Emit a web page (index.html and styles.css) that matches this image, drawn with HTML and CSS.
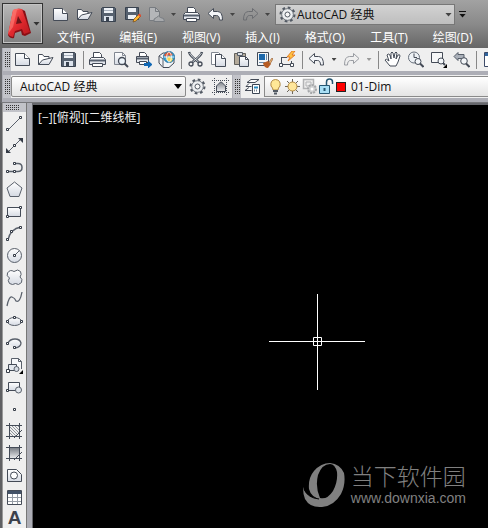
FILE: index.html
```html
<!DOCTYPE html>
<html lang="zh-CN">
<head>
<meta charset="utf-8">
<title>AutoCAD 经典</title>
<link rel="stylesheet" href="styles.css">
</head>
<body>
<svg class="sprite" aria-hidden="true">
  <defs>
    <linearGradient id="paper" x1="0" y1="0" x2="0" y2="1"><stop offset="0" stop-color="#fff"/><stop offset="1" stop-color="#d5dae3"/></linearGradient>
    <linearGradient id="fade" x1="0" y1="0" x2="0" y2="1"><stop offset="0" stop-color="#7c8188"/><stop offset="1" stop-color="#f0f1f3"/></linearGradient>
    <linearGradient id="red" x1="0" y1="0" x2="1" y2="1"><stop offset="0" stop-color="#ff6a62"/><stop offset=".5" stop-color="#e22a2f"/><stop offset="1" stop-color="#b5171d"/></linearGradient>
    <pattern id="hatch" width="3" height="3" patternUnits="userSpaceOnUse"><path d="M0 0l3 3" stroke="#777d86" stroke-width=".8"/></pattern>
  </defs>
  <symbol id="new" viewBox="0 0 17 17"><path d="M1.500 2.500h9l5 5v7h-14z" fill="url(#paper)" stroke="#444b57"/><path d="M10.500 2.500v5h5" fill="#fff" stroke="#444b57"/></symbol>
  <symbol id="open" viewBox="0 0 17 17"><path d="M1.500 13.500v-10h4l1.500 2h5v3" fill="#fff" stroke="#444b57"/><path d="M1.500 13.500l4-4.500 10.500-2.500-4 7z" fill="url(#paper)" stroke="#444b57"/></symbol>
  <symbol id="save" viewBox="0 0 17 17"><path d="M2.500 1.500h12l1 1v13h-14v-13z" fill="#56616f" stroke="#39424f"/><path d="M4 2h9v5H4z" fill="#edf1f6"/><path d="M4 4.500h9" stroke="#aab3bf"/><path d="M4 10h9v5H4z" fill="#dce3ec"/><path d="M6 11h3v4H6z" fill="#39424f"/></symbol>
  <symbol id="saveas" viewBox="0 0 17 17"><path d="M1.500 1.500h13v12h-13z" fill="#56616f" stroke="#39424f"/><path d="M4 2h8v4H4zM4 9h8v4H4z" fill="#edf1f6"/><path d="M9 16l1-3 5-5 2 2-5 5z" fill="#ffb52e" stroke="#704b20" stroke-width=".7"/><path d="M14 9l1.500-1.500 2 2L16 11z" fill="#e24b31"/></symbol>
  <symbol id="sheet" viewBox="0 0 17 17"><path d="M1.500 1.500h6l4 4v9h-10z" fill="#b4b6b9" stroke="#777b80"/><path d="M7.500 1.500v4h4" fill="none" stroke="#777b80"/><path d="M6 15.500q-1-3 2.500-4 2-3 4 0 4 0 4 4z" fill="#a8aaad" stroke="#777b80"/></symbol>
  <symbol id="print" viewBox="0 0 17 17"><path d="M4.500 6.500v-5h6l2 2v3" fill="#fff" stroke="#444b57"/><path d="M2.500 6.500h12l2 2v5h-16v-5z" fill="url(#paper)" stroke="#444b57"/><path d="M1 9.500h15" stroke="#56606e" stroke-width="2"/><path d="M3.500 12.500h10v3h-10z" fill="#fff" stroke="#444b57"/></symbol>
  <symbol id="preview" viewBox="0 0 17 17"><path d="M2.500 13.500v-12h8l3 3v9z" fill="url(#paper)" stroke="#818791"/><path d="M10.500 1.500v3h3" fill="none" stroke="#818791"/><circle cx="10" cy="10" r="3.500" fill="#edf4fa" stroke="#444b57" stroke-width="1.300"/><path d="M12.500 12.500l3.500 3.500" stroke="#444b57" stroke-width="2"/></symbol>
  <symbol id="publish" viewBox="0 0 17 17"><path d="M4.500 5.500v-4h5l2 2v2" fill="#fff" stroke="#444b57"/><path d="M1.500 5.500h12v6h-12z" fill="#e7ebf0" stroke="#444b57"/><path d="M2 7.500h11" stroke="#56606e" stroke-width="2"/><path d="M4.500 10.500h7v3h-7z" fill="#fff" stroke="#444b57"/><path d="M9 12h4V9.500l4.500 4-4.500 4V15H9z" fill="#1269b5"/></symbol>
  <symbol id="globe" viewBox="0 0 17 17"><path d="M1 5l4-3h7l4 3v7l-5 4.500H5L1 12z" fill="#f2f4f7" stroke="#444b57"/><path d="M1 5l4 3v8" fill="none" stroke="#59616d"/><circle cx="11" cy="6" r="5.500" fill="#38a5da" stroke="#25709d"/><path d="M6 4q5-6 9 0l-3 1-2-1-1 3z" fill="#e1542e"/><path d="M8 8l3-3 4 3-2 3-3-1z" fill="#f4d756"/><path d="M11 .5q-5 5.500 0 11q5-5.500 0-11M5.500 6h11" fill="none" stroke="#fff" stroke-width=".8"/></symbol>
  <symbol id="cut" viewBox="0 0 17 17"><path d="M2 1q1 4 9.500 10M15 1q-1 4-9.500 10" stroke="#444b57" stroke-width="2.500" fill="none"/><path d="M2.500 2q2 4 9 9M14.500 2q-2 4-9 9" stroke="#eef1f4" stroke-width=".8" fill="none"/><circle cx="4" cy="13" r="2" fill="none" stroke="#444b57" stroke-width="1.300"/><circle cx="13" cy="13" r="2" fill="none" stroke="#444b57" stroke-width="1.300"/></symbol>
  <symbol id="copy" viewBox="0 0 17 17"><path d="M1.500 1.500h7l2 2v10h-9z" fill="#fff" stroke="#818791"/><path d="M5.500 3.500h6l4 4v8h-10z" fill="url(#paper)" stroke="#444b57"/><path d="M11.500 3.500v4h4" fill="#fff" stroke="#444b57"/></symbol>
  <symbol id="paste" viewBox="0 0 17 17"><path d="M1.500 2.500h11v11h-11z" fill="#b4aa9a" stroke="#62605c"/><path d="M4.500 1.500h5v3h-5z" fill="#dce0e5" stroke="#555c66"/><path d="M6.500 5.500h6l3 3v7h-9z" fill="url(#paper)" stroke="#444b57"/><path d="M12.500 5.500v3h3" fill="none" stroke="#444b57"/></symbol>
  <symbol id="match" viewBox="0 0 17 17"><path d="M1.500 1.500h11v13h-11z" fill="#f4f6f8" stroke="#444b57"/><path d="M3 3h6v6H3z" fill="#1c68ab"/><path d="M10.500 3v6M3 11.500h6" stroke="#6a89a8"/><path d="M7 12l5-2 3 3-3 4q-4 0-5-5z" fill="#b85d24"/><path d="M13 11l3-4 1 1-3 5z" fill="#e8b374" stroke="#8b532c" stroke-width=".6"/></symbol>
  <symbol id="block" viewBox="0 0 17 17"><path d="M2 6.500h6M2.500 6v7M2 13.500h11M12.500 10v3" stroke="#444b57" fill="none"/><path d="M.5 12.500h3v3h-3zM11.500 12.500h3v3h-3z" fill="#fff" stroke="#444b57"/><path d="M13 0L8 6h3L9 10l7-6h-3l3-4z" fill="#ffc343" stroke="#dc6b15" stroke-width=".8"/></symbol>
  <symbol id="undo" viewBox="0 0 17 17"><path d="M6.500 2.500v3h4q5 0 5 8.500h-3q0-4.500-3-4.500h-3v3L1 7.500z" fill="#f3f5f8" stroke="#444b57"/></symbol>
  <symbol id="redo" viewBox="0 0 17 17"><path d="M10.500 2.500v3h-4q-5 0-5 8.500h3q0-4.500 3-4.500h3v3L16 7.500z" fill="none" stroke="#999ca2"/></symbol>
  <symbol id="hand" viewBox="0 0 17 17"><path d="M6 15L1 9q1-2 4 1L3 4q1-2 3 0l1 4V2q1-2 2 0l1 5 1-5q1-2 2 0l-1 6 2-4q2-1 2 1l-2 6-2 4z" fill="#fff" stroke="#444b57"/></symbol>
  <symbol id="zoomtime" viewBox="0 0 17 17"><circle cx="7" cy="6.500" r="5.500" fill="#edf1f5" stroke="#68707c"/><path d="M7 2.500v4h3" fill="none" stroke="#444b57"/><circle cx="11" cy="10.500" r="3" fill="#f3f6f9" stroke="#444b57"/><path d="M13 12.500l3.500 3.500" stroke="#444b57" stroke-width="2"/></symbol>
  <symbol id="zoomwin" viewBox="0 0 17 17"><path d="M1.500 1.500h11v10h-11z" fill="#f6f7f8" stroke="#444b57"/><circle cx="11" cy="10" r="3" fill="#f3f6f9" stroke="#444b57"/><path d="M13 12l2 2" stroke="#444b57" stroke-width="2"/><path d="M17 13v4h-4z" fill="#000"/></symbol>
  <symbol id="zoomprev" viewBox="0 0 17 17"><path d="M5 1.500v2h6v4H5v2l-4-4z" fill="#aab0b9" stroke="#555d68"/><circle cx="11" cy="10" r="3.300" fill="#f3f6f9" stroke="#444b57"/><path d="M13 12.500l3.500 3.500" stroke="#444b57" stroke-width="2"/></symbol>
  <symbol id="props" viewBox="0 0 17 17"><path d="M2.500 1.500h14v14h-14z" fill="#fff" stroke="#3d4a68"/><path d="M3 3.500h12" stroke="#31659e" stroke-width="3"/></symbol>
  <symbol id="gear" viewBox="0 0 17 17"><circle cx="8.500" cy="8.500" r="7" fill="none" stroke="#535a64" stroke-width="2" stroke-dasharray="2.750 2.750"/><circle cx="8.500" cy="8.500" r="5.800" fill="#eef0f2" stroke="#535a64" stroke-width=".8"/><circle cx="8.500" cy="8.500" r="2.500" fill="#f8f8f8" stroke="#535a64"/></symbol>
  <symbol id="workspace" viewBox="0 0 17 17"><path d="M2.500 0v17M14.500 0v17M0 2.500h17M0 14.500h17" stroke="#444b57" stroke-dasharray="1 1"/><path d="M4.500 13.500V8l4-4h1l4 4v5.500z" fill="url(#fade)" stroke="#444b57"/></symbol>
  <symbol id="layers" viewBox="0 0 17 17"><path d="M3 4.500l4-3h8l-4 3zM7.500 8.500H2l3-3M7.500 12.500H1l4-3" fill="#fff" stroke="#444b57"/><path d="M8.500 6.500h7v9h-7z" fill="#fff" stroke="#3b4655"/><path d="M10 9.500h4" stroke="#2789bd" stroke-width="2"/><path d="M10 12.500h4" stroke="#7b8590" stroke-width="2" stroke-dasharray="1 1"/></symbol>
  <symbol id="bulb" viewBox="0 0 17 17"><path d="M6 12q0-2-2-4-1-6 4.500-6.500Q14 2 13 8q-2 2-2 4z" fill="#ffe896" stroke="#b18a45"/><path d="M6 13h5M7 15.500h3" stroke="#535b65" stroke-width="2"/></symbol>
  <symbol id="sun" viewBox="0 0 17 17"><path d="M8.500 1v15M1 8.500h15M3 3l11 11M14 3L3 14" stroke="#6d675c"/><circle cx="8.500" cy="8.500" r="4.500" fill="#ffe69a" stroke="#b3893f"/></symbol>
  <symbol id="vpfreeze" viewBox="0 0 17 17"><path d="M2.500 1.500h10v9h-10z" fill="#eee" stroke="#b2b3b5" stroke-width="1.500"/><path d="M5 4h5v4H5z" fill="none" stroke="#b2b3b5"/><circle cx="11" cy="11" r="4" fill="#cfd0d1" stroke="#a6a8aa" stroke-width="2" stroke-dasharray="2 1"/><circle cx="11" cy="11" r="1.500" fill="#fff"/></symbol>
  <symbol id="lock" viewBox="0 0 17 17"><path d="M8.500 7V4q0-3 3-3t3 3v2" fill="none" stroke="#275873" stroke-width="1.500"/><path d="M1.500 7.500h10v8h-10z" fill="#a9dff5" stroke="#275873"/><path d="M6.500 10v3" stroke="#275873" stroke-width="2"/></symbol>
  <symbol id="line" viewBox="0 0 17 17"><path d="M2 15L15 2" stroke="#59606b"/><path d="M.5 13.500h2v2h-2zM13.500 1.500h2v2h-2z" fill="#fff" stroke="#343b46"/></symbol>
  <symbol id="xline" viewBox="0 0 17 17"><path d="M2 15L15 2" stroke="#59606b"/><path d="M0 11v5h5zM12 1h5v5z" fill="#343b46"/><path d="M7.500 7.500h2v2h-2z" fill="#fff" stroke="#343b46"/></symbol>
  <symbol id="pline" viewBox="0 0 17 17"><path d="M1 12.500h11q4 0 4-4t-4-4H9" fill="none" stroke="#59606b" stroke-width="1.500"/><path d="M.5 11.500h2v2h-2zM7.500 11.500h2v2h-2zM7.500 3.500h2v2h-2z" fill="#fff" stroke="#343b46"/></symbol>
  <symbol id="polygon" viewBox="0 0 17 17"><path d="M8.500 1l7.500 6-3 8.500H4L1 7z" fill="url(#paper)" stroke="#59606b"/></symbol>
  <symbol id="rect" viewBox="0 0 17 17"><path d="M1.500 4.500h13v9h-13z" fill="url(#paper)" stroke="#444b57"/><path d="M.5 12.500h2v2h-2zM13.500 3.500h2v2h-2z" fill="#fff" stroke="#343b46"/></symbol>
  <symbol id="arc" viewBox="0 0 17 17"><path d="M2 15Q4 4 15 2" fill="none" stroke="#59606b" stroke-width="1.300"/><path d="M.5 13.500h2v2h-2zM4.500 5.500h2v2h-2zM13.500 1.500h2v2h-2z" fill="#fff" stroke="#343b46"/></symbol>
  <symbol id="circle" viewBox="0 0 17 17"><circle cx="8.500" cy="8.500" r="7" fill="url(#paper)" stroke="#59606b"/><path d="M8.500 8.500l5-5" stroke="#59606b"/><path d="M7.500 7.500h2v2h-2z" fill="#fff" stroke="#343b46"/></symbol>
  <symbol id="cloud" viewBox="0 0 17 17"><path d="M3.500 9Q0 7 1.500 4 4 0 8 2.500q4-3 6.500 0 1.500 3-.5 5.500 3 2 1.500 5.500-3 3.500-6 1-3 2-6 0-2.500-3 0-5.500z" fill="url(#paper)" stroke="#59606b"/></symbol>
  <symbol id="spline" viewBox="0 0 17 17"><path d="M1 15Q3 5 6 6t4 4Q14 12 16 1" fill="none" stroke="#59606b" stroke-width="1.300"/></symbol>
  <symbol id="ellipse" viewBox="0 0 17 17"><ellipse cx="8.500" cy="8.500" rx="7" ry="4" fill="url(#paper)" stroke="#59606b"/><path d="M.5 7.500h2v2h-2zM14.500 7.500h2v2h-2zM7.500 3.500h2v2h-2z" fill="#fff" stroke="#343b46"/></symbol>
  <symbol id="earc" viewBox="0 0 17 17"><path d="M2 8q2-4 7-4t6 4q0 4-6 5" fill="url(#paper)" stroke="#59606b" stroke-width="1.300"/><path d="M.5 7.500h2v2h-2zM7.500 11.500h2v2h-2z" fill="#fff" stroke="#343b46"/></symbol>
  <symbol id="insert" viewBox="0 0 17 17"><path d="M5.500 7V1.500h7l3 3V12" fill="#f7f8fa" stroke="#59606b"/><path d="M12.500 1.500v3h3" fill="none" stroke="#59606b"/><path d="M2.500 7.500h8v6h-8z" fill="#e3e7ed" stroke="#444b57"/><circle cx="10.500" cy="12" r="2.500" fill="#d6dce4" stroke="#59606b"/><path d="M.5 12.500h3v3h-3z" fill="#fff" stroke="#343b46"/><path d="M17 13v4h-4z" fill="#000"/></symbol>
  <symbol id="mkblock" viewBox="0 0 17 17"><path d="M2.500 3.500h11v8h-11z" fill="url(#paper)" stroke="#444b57"/><circle cx="12.500" cy="11" r="3" fill="#e1e6ec" stroke="#59606b"/><path d="M.5 10.500h2v2h-2z" fill="#fff" stroke="#343b46"/></symbol>
  <symbol id="point" viewBox="0 0 17 17"><path d="M7.500 7.500h2v2h-2z" fill="#fff" stroke="#343b46"/></symbol>
  <symbol id="hatching" viewBox="0 0 17 17"><path d="M3 3h11v6l-5 5H3z" fill="url(#hatch)"/><path d="M3.500 0v16M0 2.500h16M0 13.500h16M13.500 0v16M8 15l8-8" stroke="#444b57" fill="none"/></symbol>
  <symbol id="gradient" viewBox="0 0 17 17"><path d="M3 3h11v6l-5 5H3z" fill="url(#fade)"/><path d="M3.500 0v16M0 2.500h16M0 13.500h16M13.500 0v16M8 15l8-8" stroke="#444b57" fill="none"/></symbol>
  <symbol id="region" viewBox="0 0 17 17"><path d="M1.500 2.500h9l5 5v7h-14z" fill="url(#paper)" stroke="#444b57"/><circle cx="8" cy="8.500" r="3.500" fill="#fff" stroke="#444b57"/></symbol>
  <symbol id="table" viewBox="0 0 17 17"><path d="M1.500 1.500h14v14h-14z" fill="#fff" stroke="#444b57"/><path d="M2 3.500h13" stroke="#435267" stroke-width="3"/><path d="M2 8.500h13M2 12.500h13M6.500 5v10M11.500 5v10" stroke="#969da6"/></symbol>
</svg>

<header class="titlebar">
  <button class="app" aria-label="应用程序菜单">
    <svg class="app-logo" viewBox="0 0 24 34"><path d="M1 28L6 4q3-3 8-2l4 2 6 22-6 3-3-1-1-4-6 2-1 5q-4 1-6-3z" fill="#8a0f15"/><path d="M1 27L6 3q4-2 9-1l8 23-6 2-2-5-7 2-2 6q-3 0-5-3z" fill="url(#red)"/><path d="M9 17l2-8 4 7z" fill="#6c1518"/><path d="M6 3q4-2 7-1l-3 1-4 17-5 7z" fill="#ff8078" opacity=".6"/></svg>
    <i class="caret"></i>
  </button>
  <div class="title-main">
    <div class="quick">
      <button aria-label="新建"><svg><use href="#new"/></svg></button>
      <button aria-label="打开"><svg><use href="#open"/></svg></button>
      <button aria-label="保存"><svg><use href="#save"/></svg></button>
      <button aria-label="另存为"><svg><use href="#saveas"/></svg></button>
      <button aria-label="图纸"><svg><use href="#sheet"/></svg></button>
      <button class="drop" aria-label="图纸选项"><i class="caret"></i></button>
      <button aria-label="打印"><svg><use href="#print"/></svg></button>
      <button aria-label="放弃"><svg><use href="#undo"/></svg></button>
      <button class="drop" aria-label="放弃列表"><i class="caret"></i></button>
      <button class="dim" aria-label="重做"><svg><use href="#redo"/></svg></button>
      <button class="drop" aria-label="重做列表"><i class="caret"></i></button>
      <div class="combo workspace-top">
        <svg><use href="#gear"/></svg>
        <select aria-label="工作空间"><option>AutoCAD 经典</option></select>
        <i class="caret"></i>
      </div>
      <button class="more" aria-label="自定义"><i class="caret"></i></button>
    </div>
    <nav class="menu">
      <a href="#">文件(F)</a><a href="#">编辑(E)</a><a href="#">视图(V)</a><a href="#">插入(I)</a><a href="#">格式(O)</a><a href="#">工具(T)</a><a href="#">绘图(D)</a>
    </nav>
  </div>
</header>

<div class="bar standard">
  <i class="grip"></i>
  <button aria-label="新建"><svg><use href="#new"/></svg></button>
  <button aria-label="打开"><svg><use href="#open"/></svg></button>
  <button aria-label="保存"><svg><use href="#save"/></svg></button>
  <i class="sep"></i>
  <button aria-label="打印"><svg><use href="#print"/></svg></button>
  <button aria-label="打印预览"><svg><use href="#preview"/></svg></button>
  <button aria-label="发布"><svg><use href="#publish"/></svg></button>
  <button aria-label="三维打印"><svg><use href="#globe"/></svg></button>
  <i class="sep"></i>
  <button aria-label="剪切"><svg><use href="#cut"/></svg></button>
  <button aria-label="复制"><svg><use href="#copy"/></svg></button>
  <button aria-label="粘贴"><svg><use href="#paste"/></svg></button>
  <button aria-label="特性匹配"><svg><use href="#match"/></svg></button>
  <button aria-label="块编辑器"><svg><use href="#block"/></svg></button>
  <i class="sep"></i>
  <button aria-label="放弃"><svg><use href="#undo"/></svg></button>
  <button class="drop" aria-label="放弃列表"><i class="caret"></i></button>
  <button aria-label="重做"><svg><use href="#redo"/></svg></button>
  <button class="drop dim" aria-label="重做列表"><i class="caret"></i></button>
  <i class="sep"></i>
  <button aria-label="平移"><svg><use href="#hand"/></svg></button>
  <button aria-label="实时缩放"><svg><use href="#zoomtime"/></svg></button>
  <button aria-label="窗口缩放"><svg><use href="#zoomwin"/></svg></button>
  <button aria-label="缩放上一个"><svg><use href="#zoomprev"/></svg></button>
  <i class="sep"></i>
  <button aria-label="特性"><svg><use href="#props"/></svg></button>
</div>

<div class="bars">
  <div class="bar">
    <i class="grip"></i>
    <div class="combo workspace">
      <select aria-label="工作空间"><option>AutoCAD 经典</option></select>
      <i class="caret"></i>
    </div>
    <button aria-label="工作空间设置"><svg><use href="#gear"/></svg></button>
    <button aria-label="我的工作空间"><svg><use href="#workspace"/></svg></button>
  </div>
  <div class="bar layerbar">
    <i class="grip"></i>
    <button aria-label="图层特性"><svg><use href="#layers"/></svg></button>
    <div class="combo layer">
      <svg><use href="#bulb"/></svg><svg><use href="#sun"/></svg><svg><use href="#vpfreeze"/></svg><svg><use href="#lock"/></svg>
      <i class="swatch"></i>
      <select aria-label="图层"><option>01-Dim</option></select>
    </div>
  </div>
</div>

<div class="work">
  <div class="draw">
    <i class="grip flat"></i>
    <button aria-label="直线"><svg><use href="#line"/></svg></button>
    <button aria-label="构造线"><svg><use href="#xline"/></svg></button>
    <button aria-label="多段线"><svg><use href="#pline"/></svg></button>
    <button aria-label="正多边形"><svg><use href="#polygon"/></svg></button>
    <button aria-label="矩形"><svg><use href="#rect"/></svg></button>
    <button aria-label="圆弧"><svg><use href="#arc"/></svg></button>
    <button aria-label="圆"><svg><use href="#circle"/></svg></button>
    <button aria-label="修订云线"><svg><use href="#cloud"/></svg></button>
    <button aria-label="样条曲线"><svg><use href="#spline"/></svg></button>
    <button aria-label="椭圆"><svg><use href="#ellipse"/></svg></button>
    <button aria-label="椭圆弧"><svg><use href="#earc"/></svg></button>
    <button aria-label="插入块"><svg><use href="#insert"/></svg></button>
    <button aria-label="创建块"><svg><use href="#mkblock"/></svg></button>
    <button aria-label="点"><svg><use href="#point"/></svg></button>
    <button aria-label="图案填充"><svg><use href="#hatching"/></svg></button>
    <button aria-label="渐变色"><svg><use href="#gradient"/></svg></button>
    <button aria-label="面域"><svg><use href="#region"/></svg></button>
    <button aria-label="表格"><svg><use href="#table"/></svg></button>
    <button class="mtext" aria-label="多行文字">A</button>
  </div>
  <main class="canvas">
    <p class="view">[−][俯视][二维线框]</p>
    <svg class="cross" viewBox="0 0 97 97"><path d="M48.500 1v96M0 48.500h96M44.500 44.500h8v8h-8z" fill="none" stroke="#fff"/></svg>
    <div class="mark">
      <svg viewBox="0 0 42 45"><path fill-rule="evenodd" d="M0 24Q2 33 12 35L17 36Q8 34 6 26 5 15 11 8 18 0 27 0 37 1 41 10 43 21 38 31 31 43 19 44 7 45 2 36 0 31 0 24zM27 1Q19 1 15 12 12 24 17 35 24 37 30 28 35 19 34 9 32 1 27 1z" fill="#808080"/><path d="M1 26Q5 35 16 36" fill="none" stroke="#000"/></svg>
      <div><strong>当下软件园</strong><span>www.downxia.com</span></div>
    </div>
  </main>
</div>
</body>
</html>
```
FILE: styles.css
```css
* { box-sizing: border-box; }
body {
  margin: 0;
  height: 100vh;
  overflow: hidden;
  display: flex;
  flex-direction: column;
  background: linear-gradient(90deg, #6c6d71 2px, #adaeb6 2px);
  font: 12px/16px "Open Sans", "Noto Sans CJK SC", sans-serif;
  color: #111;
}
.sprite { position: absolute; width: 0; height: 0; }
svg { display: block; flex: none; width: 17px; height: 17px; }
button {
  flex: none;
  width: 23px;
  height: 23px;
  padding: 3px;
  border: 0;
  background: none;
  font: inherit;
  color: inherit;
}
select {
  appearance: none;
  flex: 1;
  min-width: 0;
  height: 18px;
  padding: 0;
  border: 0;
  background: none;
  font: inherit;
  color: inherit;
}
.caret {
  display: block;
  flex: none;
  width: 7px;
  height: 4px;
  background: currentColor;
  clip-path: polygon(0 0, 100% 0, 50% 100%);
}

/* Title bar */
.titlebar {
  flex: none;
  display: flex;
  height: 48px;
  padding: 3px 0 0 2px;
  background: linear-gradient(#a2a2a2, #8a8a8a 50%, #666);
}
.app {
  display: flex;
  align-items: center;
  gap: 2px;
  width: 41px;
  height: 41px;
  padding: 0 0 0 4px;
  border: 1px solid #333;
  box-shadow: inset 0 0 0 1px #c4c4c4;
  background: linear-gradient(#b9b9b9, #808080);
  color: #333;
}
.app-logo { width: 24px; height: 34px; }
.title-main { flex: 1; min-width: 0; padding-left: 5px; }
.quick { display: flex; align-items: center; height: 23px; }
.quick button { width: 24px; padding: 3px 4px; }
.quick .drop, .drop {
  display: flex;
  align-items: center;
  justify-content: center;
  width: 12px;
  padding: 0;
  color: #444;
}
.quick .drop { width: 11px; }
.quick .dim svg { filter: brightness(.7); }
.drop .caret { width: 5px; height: 3px; }
.drop.dim { color: #999; }
.combo { display: flex; align-items: center; }
.workspace-top {
  flex: none;
  width: 180px;
  height: 21px;
  margin-left: 2px;
  padding: 0 2px 0 3px;
  gap: 1px;
  border: 1px solid #777;
  background: linear-gradient(#d2d2d2, #bebebe);
}
.workspace-top .caret { color: #444; }
.quick .more {
  width: 15px;
  height: 7px;
  padding: 2px 4px 0;
  color: #111;
  background: linear-gradient(#111, #111) 4px 0 / 7px 1px no-repeat;
}
.menu { display: flex; gap: 25px; padding: 4px 0 0 9px; }
.menu a { flex: none; color: #fff; text-decoration: none; }

/* Toolbars */
.bar { display: flex; align-items: center; height: 23px; background: #efefef; }
.grip {
  flex: none;
  width: 8px;
  height: 23px;
  padding: 4px 1px 4px 2px;
  background:
    linear-gradient(transparent 1px, #c2c3c9 1px) 0 0 / 2px 2px content-box,
    linear-gradient(90deg, #333 1px, transparent 1px) 0 0 / 2px 2px content-box,
    #c2c3c9;
}
.standard { flex: none; margin-left: 3px; overflow: hidden; }
.sep { flex: none; width: 6px; height: 18px; background: linear-gradient(#888, #888) center / 1px 100% no-repeat; }
.bars { flex: none; display: flex; gap: 1px; margin: 4px 0 0 3px; }
.workspace {
  width: 175px;
  height: 21px;
  padding: 0 3px 0 8px;
  border: 1px solid #8a8a8a;
  border-radius: 2px;
  background: linear-gradient(#fff, #e4e4e4);
}
.workspace .caret { width: 8px; height: 5px; color: #000; }
.layerbar { flex: 1; min-width: 0; }
.layer {
  flex: 1;
  min-width: 0;
  height: 21px;
  padding-left: 2px;
  border: 1px solid #8a8a8a;
  border-right: 0;
  background: linear-gradient(#fff, #e4e4e4);
}
.swatch { flex: none; width: 10px; height: 10px; margin: 0 5px 0 1px; border: 1px solid #222; background: #f00; }

/* Drawing area */
.work {
  flex: 1;
  min-height: 0;
  display: flex;
  gap: 5px;
  margin-top: 4px;
  border-top: 1px solid #77787c;
  border-left: 2px solid #5f6063;
}
.draw { flex: none; width: 25px; background: #efefef; border-right: 1px solid #777; border-left: 1px solid #999; }
.draw button { display: block; height: 22px; }
.flat { display: block; width: 23px; height: 9px; padding: 2px 6px 2px 3px; }
.draw .mtext { height: 20px; padding: 0; color: #3c424c; font: bold 19px/20px "Liberation Sans", sans-serif; }
.canvas { position: relative; flex: 1; min-width: 0; border: solid #66676c; border-width: 2px 0 0 1px; background: #000; }
.view { margin: 5px 5px; color: #eee; }
.cross { position: absolute; left: 236px; top: 188px; width: 97px; height: 97px; }
.mark { position: absolute; right: 22px; bottom: 20px; display: flex; align-items: center; gap: 6px; color: #808080; }
.mark svg { width: 42px; height: 45px; }
.mark strong { display: block; font: 300 23px/26px "Noto Sans CJK SC", sans-serif; }
.mark span { display: block; font: 14px/20px "Liberation Sans", sans-serif; }
```
